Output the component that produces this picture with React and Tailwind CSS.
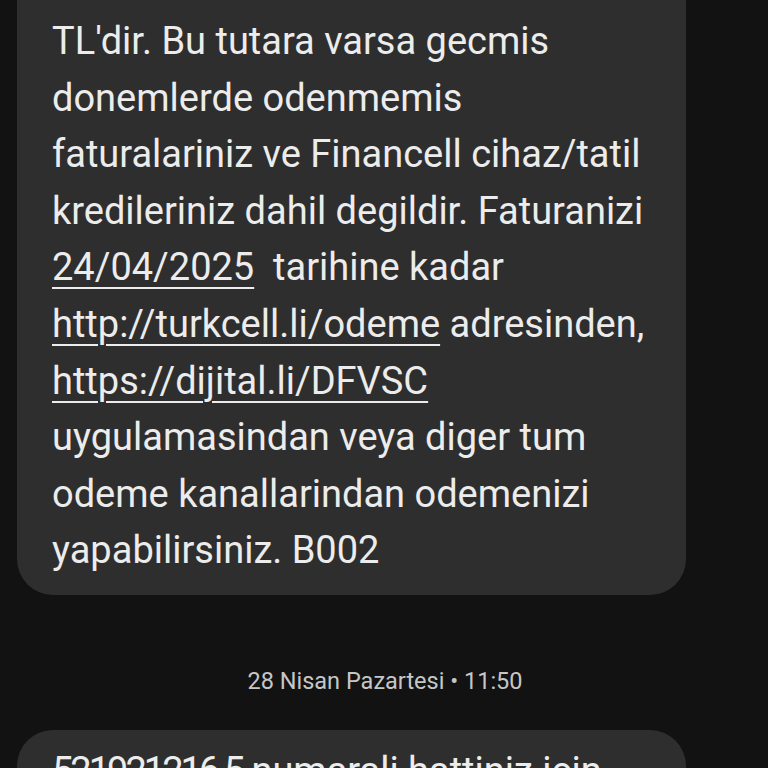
import React from "react";

const lines = [
  [{ t: "TL'dir. Bu tutara varsa gecmis" }],
  [{ t: "donemlerde odenmemis" }],
  [{ t: "faturalariniz ve Financell cihaz/tatil" }],
  [{ t: "kredileriniz dahil degildir. Faturanizi" }],
  [{ t: "24/04/2025", u: true }, { t: "  tarihine kadar" }],
  [{ t: "http://turkcell.li/odeme", u: true }, { t: " adresinden," }],
  [{ t: "https://dijital.li/DFVSC", u: true }],
  [{ t: "uygulamasindan veya diger tum" }],
  [{ t: "odeme kanallarindan odemenizi" }],
  [{ t: "yapabilirsiniz. B002" }],
];

function Line({ parts }) {
  return (
    <div className="h-[56.6px] leading-[56.6px] whitespace-pre">
      {parts.map((p, i) =>
        p.u ? (
          <span key={i} className="underline decoration-2 underline-offset-[7px]">
            {p.t}
          </span>
        ) : (
          <span key={i}>{p.t}</span>
        )
      )}
    </div>
  );
}

export default function App() {
  return (
    <div
      className="h-[768px] w-[768px] overflow-hidden bg-[#121212] text-[#ececec]"
      style={{ fontFamily: "Roboto, 'Noto Sans', sans-serif" }}
    >
      <div className="ml-[17px] w-[669px] rounded-b-[36px] bg-[#2e2e2e] pl-[35px] pt-[13px] pb-[16px] text-[38px]">
        {lines.map((l, i) => (
          <Line key={i} parts={l} />
        ))}
      </div>

      <div className="mt-[72px] pl-[2px] text-center text-[23.5px] leading-[28px] text-[#c6c6c6]">
        28 Nisan Pazartesi • 11:50
      </div>

      <div className="mt-[35px] ml-[17px] w-[669px] h-[80px] rounded-t-[36px] bg-[#2e2e2e] pl-[35px] pt-[13px] text-[38px]">
        <div className="leading-[56.6px] whitespace-pre">
          <span className="tracking-[-3px]">521921216 5</span> numarali hattiniz icin
        </div>
      </div>
    </div>
  );
}
